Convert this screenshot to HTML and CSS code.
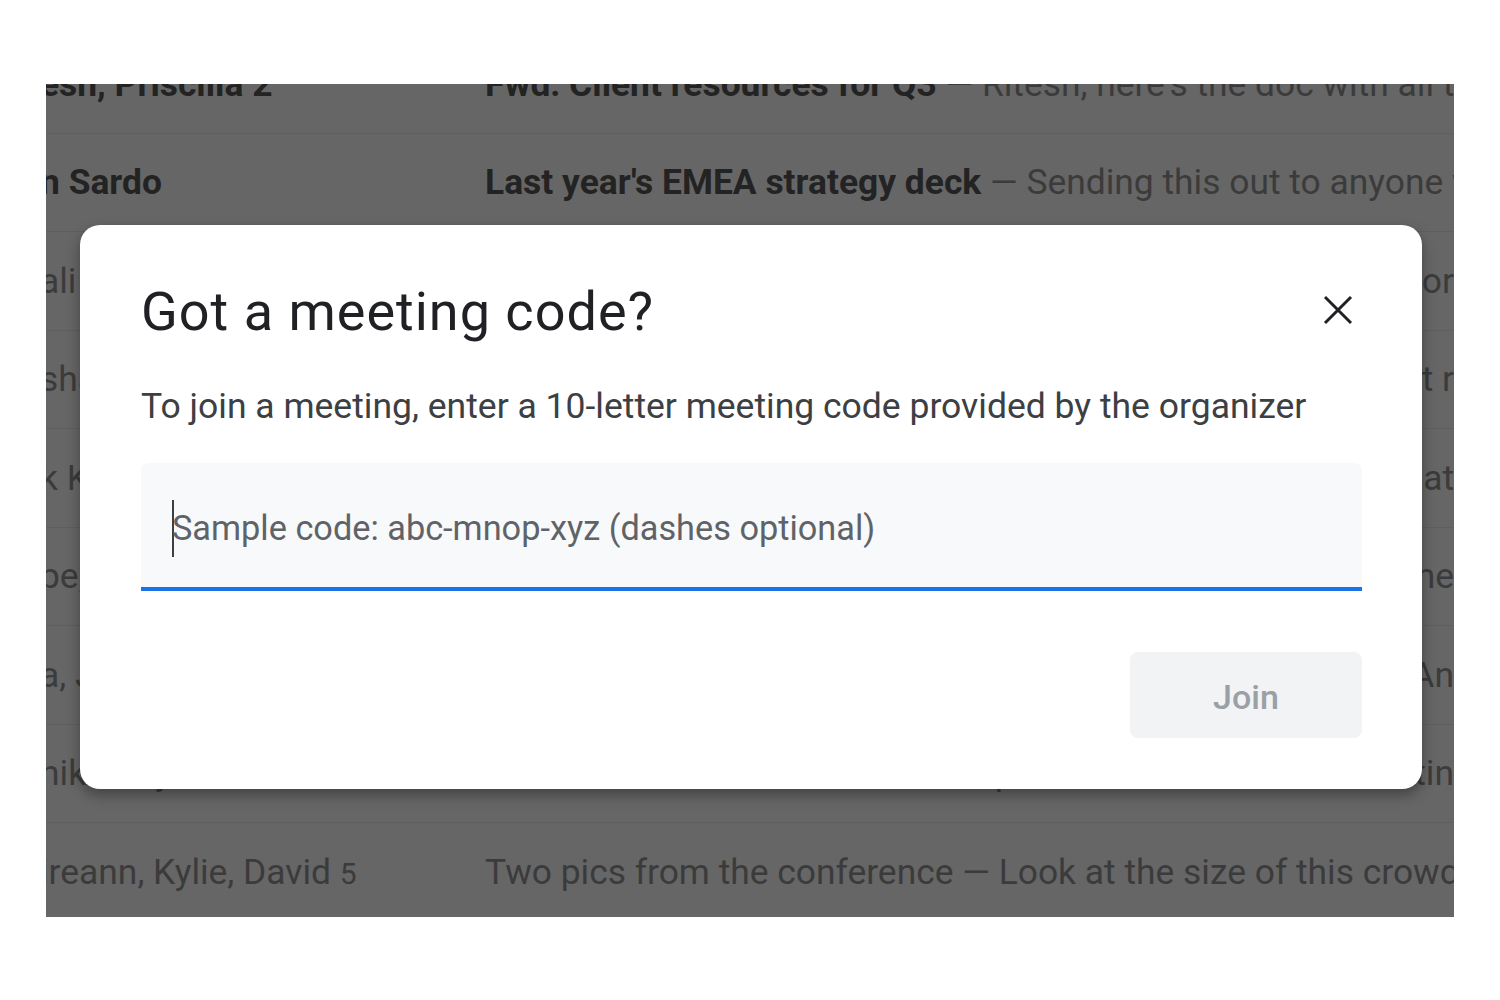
FILE: index.html
```html
<!DOCTYPE html>
<html lang="en">
<head>
<meta charset="utf-8">
<title>Got a meeting code?</title>
<link rel="stylesheet" href="styles.css">
</head>
<body>
<div class="frame">
  <div class="list">
    <div class="row unread"><div class="sender">esh, Priscilla 2</div><div class="subject"><b>Fwd: Client resources for Q3</b> <span class="snip">— Ritesh, here's the doc with all the details</span></div></div>
    <div class="row unread"><div class="sender">n Sardo</div><div class="subject"><b>Last year's EMEA strategy deck</b> <span class="snip">— Sending this out to anyone who missed it</span></div></div>
    <div class="row"><div class="sender">ali Jain</div><div class="subject tail">Sales sync — Notes from the call for</div></div>
    <div class="row"><div class="sender">sha Patel</div><div class="subject tail">Volunteer day — We meet at r</div></div>
    <div class="row"><div class="sender">k Kim</div><div class="subject tail">Lunch tomorrow? — Let me know what</div></div>
    <div class="row"><div class="sender">pe, Liam</div><div class="subject tail">Photos — Tell me your favorite one</div></div>
    <div class="row"><div class="sender">a, Jo 3</div><div class="subject tail">Re: Guest list — Looping in An</div></div>
    <div class="row"><div class="sender">nika Ray</div><div class="subject tail">Quick question — Are we still meetin</div></div>
    <div class="row"><div class="sender">ireann, Kylie, David <small>5</small></div><div class="subject">Two pics from the conference <span class="snip">— Look at the size of this crowd!</span></div></div>
  </div>

  <div class="dialog" role="dialog" aria-labelledby="dlg-title">
    <div class="header">
      <h1 id="dlg-title" class="title">Got a meeting code?</h1>
      <button class="close" aria-label="Close">
        <svg width="30" height="30" viewBox="0 0 30 30"><path d="M2 2 L28 28 M28 2 L2 28" stroke="#202124" stroke-width="3" fill="none"/></svg>
      </button>
    </div>
    <p class="desc">To join a meeting, enter a 10-letter meeting code provided by the organizer</p>
    <div class="field">
      <span class="caret"></span><span class="placeholder">Sample code: abc-mnop-xyz (dashes optional)</span>
    </div>
    <div class="actions">
      <button class="join">Join</button>
    </div>
  </div>
</div>
</body>
</html>
```
FILE: styles.css
```css
html, body {
  margin: 0;
  padding: 0;
  background: #ffffff;
}
body {
  font-family: Roboto, "Liberation Sans", sans-serif;
}
.frame {
  position: relative;
  margin: 84px 0 0 46px;
  width: 1408px;
  height: 833px;
  overflow: hidden;
  background: #666666;
}
.list {
  margin-top: -49px;
  width: 1408px;
}
.row {
  box-sizing: border-box;
  height: 98.5px;
  border-bottom: 1px solid #5f5f5f;
  display: flex;
  align-items: center;
  white-space: nowrap;
  font-size: 35.4px;
  color: #3b3b3b;
}
.row.unread .sender,
.row b {
  font-weight: 700;
  color: #232323;
}
.sender {
  margin-left: -6px;
  width: 445px;
  flex: none;
  overflow: hidden;
}
.sender small {
  font-size: 30px;
}
.subject {
  flex: 1;
  min-width: 0;
}
.subject.tail {
  text-align: right;
  overflow: hidden;
}
.snip {
  color: #3b3b3b;
}

.dialog {
  position: absolute;
  left: 34px;
  top: 141px;
  width: 1342px;
  height: 564px;
  box-sizing: border-box;
  padding: 57px 60px 0 61px;
  background: #ffffff;
  border-radius: 20px;
  box-shadow: 0 6px 14px rgba(0, 0, 0, 0.35);
}
.header {
  display: flex;
  justify-content: space-between;
  align-items: flex-start;
}
.title {
  margin: 0;
  font-family: Roboto, sans-serif;
  font-weight: 400;
  font-size: 54px;
  letter-spacing: 1px;
  line-height: 60px;
  color: #202124;
}
.close {
  margin: 13px 9px 0 0;
  padding: 0;
  border: 0;
  background: none;
  width: 30px;
  height: 30px;
  display: block;
}
.close svg { display: block; }
.desc {
  margin: 44px 0 0;
  font-size: 35.5px;
  line-height: 40px;
  color: #3c4043;
}
.field {
  margin-top: 37px;
  box-sizing: border-box;
  height: 128px;
  background: #f8f9fa;
  border-bottom: 4px solid #1a73e8;
  border-radius: 8px 8px 0 0;
  display: flex;
  align-items: center;
  padding-left: 31px;
  padding-top: 6px;
}
.caret {
  display: inline-block;
  width: 2px;
  height: 57px;
  background: #3c4043;
  margin-right: -2px;
}
.placeholder {
  font-size: 34.3px;
  color: #5f6368;
}
.actions {
  display: flex;
  justify-content: flex-end;
  margin-top: 61px;
}
.join {
  width: 232px;
  height: 86px;
  border: 0;
  border-radius: 8px;
  background: #f1f3f4;
  color: #9aa0a6;
  font-family: Roboto, sans-serif;
  font-size: 34px;
  font-weight: 500;
  padding: 4px 0 0;
}
```
